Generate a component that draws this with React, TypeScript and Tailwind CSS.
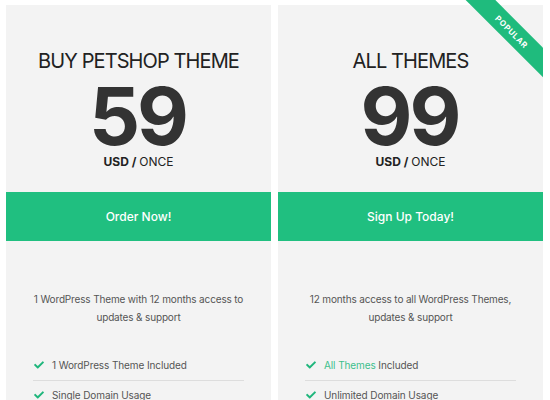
import React from 'react';

const features1 = [
  { accent: '', text: '1 WordPress Theme Included' },
  { accent: '', text: 'Single Domain Usage' },
];

const features2 = [
  { accent: 'All Themes', text: ' Included' },
  { accent: '', text: 'Unlimited Domain Usage' },
];

function Check() {
  return (
    <svg viewBox="0 0 512 512" className="w-[10px] h-[10px] shrink-0 fill-[#1fb67c]">
      <path d="M173.9 439.4l-166.4-166.4c-10-10-10-26.2 0-36.2l36.2-36.2c10-10 26.2-10 36.2 0L192 312.7 432.1 72.6c10-10 26.2-10 36.2 0l36.2 36.2c10 10 10 26.2 0 36.2l-294.4 294.4c-10 10-26.2 10-36.2 0z" />
    </svg>
  );
}

interface PlanProps {
  title: string;
  price: string;
  cta: string;
  desc: React.ReactNode;
  features: { accent: string; text: string }[];
  popular?: boolean;
}

function Plan({ title, price, cta, desc, features, popular }: PlanProps) {
  return (
    <div className="relative w-[265px] shrink-0 bg-[#f3f3f3] flex flex-col items-center pb-[20px]">
      {popular && (
        <div className="absolute top-[-5px] right-0 w-[100px] h-[100px] overflow-hidden pointer-events-none">
          <div className="absolute left-[-6px] top-[21px] w-[150px] h-[21px] rotate-45 bg-[#1fbb7d] flex items-center justify-center">
            <span className="text-white text-[8px] font-bold tracking-[0.6px] leading-none">POPULAR</span>
          </div>
        </div>
      )}

      <h2 className="mt-[41px] text-[20px] leading-[30px] tracking-[-0.9px] text-[#222]">{title}</h2>
      <div className="mt-[4px] text-[80px] leading-[72px] font-bold text-[#333] tracking-[-3px] pr-[2px]">{price}</div>
      <div className="text-[12px] leading-[20px] text-[#222]">
        <span className="font-bold">USD / </span>
        <span>ONCE</span>
      </div>

      <button className="mt-[20px] w-full h-[49px] shrink-0 bg-[#20bf80] text-white text-[12px] font-medium">
        {cta}
      </button>

      <p className="mt-[49px] text-center whitespace-nowrap text-[10px] tracking-[-0.15px] leading-[18px] text-[#555]">
        {desc}
      </p>

      <ul className="mt-[29px] w-[211px]">
        {features.map((f, i) => (
          <li
            key={i}
            className={`flex items-center gap-[8px] pl-[1px] leading-[20px] text-[10px] tracking-[-0.1px] text-[#555] ${
              i < features.length - 1 ? 'border-b border-[#dddddd] pb-[5px]' : 'mt-[4px]'
            }`}
          >
            <Check />
            <span>
              {f.accent && <span className="text-[#3cbf8c]">{f.accent}</span>}
              {f.text}
            </span>
          </li>
        ))}
      </ul>
    </div>
  );
}

export default function App() {
  return (
    <div className="w-[550px] h-[400px] overflow-hidden bg-white flex items-start gap-[7px] pl-[6px] pt-[5px] font-['Inter',sans-serif]">
      <Plan
        title="BUY PETSHOP THEME"
        price="59"
        cta="Order Now!"
        desc={<>1 WordPress Theme with 12 months access to<br />updates &amp; support</>}
        features={features1}
      />
      <Plan
        title="ALL THEMES"
        price="99"
        cta="Sign Up Today!"
        desc={<>12 months access to all WordPress Themes,<br />updates &amp; support</>}
        features={features2}
        popular
      />
    </div>
  );
}
